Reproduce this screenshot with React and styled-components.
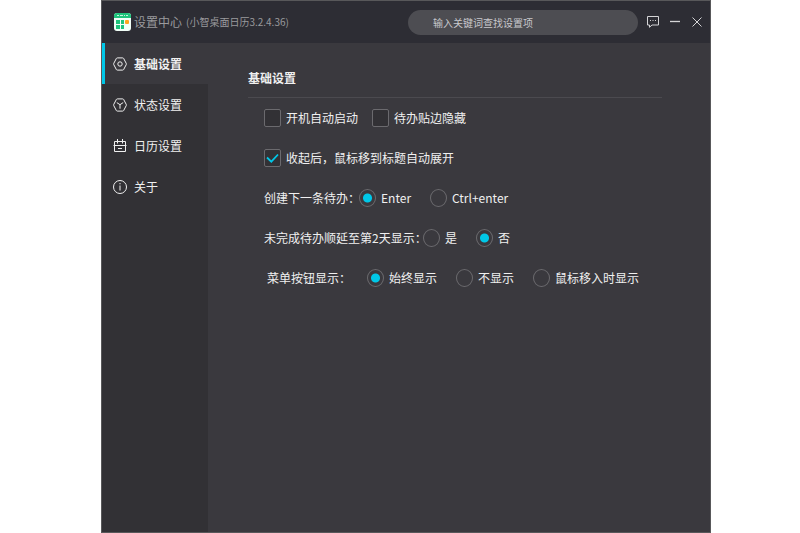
import React, { useState } from 'react';
import styled, { createGlobalStyle } from 'styled-components';

const NAV = [
  { id: 'basic', text: '基础设置', Icon: HexGearIcon },
  { id: 'status', text: '状态设置', Icon: HexStatusIcon },
  { id: 'calendar', text: '日历设置', Icon: CalendarIcon },
  { id: 'about', text: '关于', Icon: InfoIcon },
];

const App = () => {
  const [page, setPage] = useState('basic');

  return (
    <Page>
      <GlobalStyle />
      <Window>
        <Header>
          <LogoIcon />
          <Title>设置中心</Title>
          <Version>(小智桌面日历3.2.4.36)</Version>
          <Search
            type='search'
            placeholder='输入关键词查找设置项'
            aria-label='输入关键词查找设置项'
          />
          <WindowButtons>
            <IconButton type='button' aria-label='反馈'>
              <ChatIcon />
            </IconButton>
            <IconButton type='button' aria-label='最小化'>
              <MinimizeIcon />
            </IconButton>
            <IconButton type='button' aria-label='关闭'>
              <CloseIcon />
            </IconButton>
          </WindowButtons>
        </Header>
        <Body>
          <Sidebar>
            {NAV.map(({ id, text, Icon }) => (
              <NavButton
                key={id}
                type='button'
                $active={page === id}
                onClick={() => setPage(id)}
              >
                <Icon />
                {text}
              </NavButton>
            ))}
          </Sidebar>
          <Content>
            <Heading>基础设置</Heading>
            <Row $gap='14px'>
              <CheckOption>开机自动启动</CheckOption>
              <CheckOption>待办贴边隐藏</CheckOption>
            </Row>
            <Row>
              <CheckOption defaultChecked>
                收起后，鼠标移到标题自动展开
              </CheckOption>
            </Row>
            <RadioRow
              name='next'
              caption='创建下一条待办：'
              width='95px'
              options={['Enter', 'Ctrl+enter']}
              selected='Enter'
            />
            <RadioRow
              name='postpone'
              caption='未完成待办顺延至第2天显示：'
              width='159px'
              options={['是', '否']}
              selected='否'
            />
            <RadioRow
              name='menu'
              caption='菜单按钮显示：'
              width='103px'
              indent='3px'
              options={['始终显示', '不显示', '鼠标移入时显示']}
              selected='始终显示'
            />
          </Content>
        </Body>
      </Window>
    </Page>
  );
};

export default App;

function CheckOption({ children, defaultChecked }) {
  return (
    <Option>
      <CheckWrap>
        <Checkbox type='checkbox' defaultChecked={defaultChecked} />
        <svg width='17' height='18' viewBox='0 0 17 18' aria-hidden='true'>
          <path
            d='M3 8.5 7.3 12.7 14 5.5'
            fill='none'
            stroke='#00c8e8'
            strokeWidth='1.8'
          />
        </svg>
      </CheckWrap>
      {children}
    </Option>
  );
}

function RadioRow({ name, caption, width, indent, options, selected }) {
  return (
    <Row role='radiogroup' aria-label={caption}>
      <Caption $width={width} $indent={indent}>
        {caption}
      </Caption>
      <Options>
        {options.map((text) => (
          <Option key={text}>
            <Radio type='radio' name={name} defaultChecked={text === selected} />
            {text}
          </Option>
        ))}
      </Options>
    </Row>
  );
}

function LogoIcon() {
  return (
    <svg width='17' height='20' viewBox='0 0 17 20' aria-hidden='true'>
      <rect x='0' y='1' width='17' height='18' rx='3' fill='#f2fff8' />
      <path d='M0 6V4a3 3 0 0 1 3-3h11a3 3 0 0 1 3 3v2z' fill='#1fc47c' />
      <path d='M3 3.500h2M6 3.500h3M10 3.500h1M12 3.500h2' stroke='#c8f5de' />
      <path
        d='M2 8h4v4H2zM7 8h3v4H7zM2 13h4v4H2zM7 13h3v4H7z'
        fill='#1fc47c'
      />
      <rect x='11' y='8' width='4' height='4' rx='1' fill='#ffa51e' />
    </svg>
  );
}

function HexGearIcon() {
  return (
    <LineIcon viewBox='0 0 14 14'>
      <path d='M4.300.9h5.400q.6 0 .9.500l2.600 4.900q.4.700 0 1.400l-2.600 4.900q-.3.500-.9.500H4.300q-.6 0-.9-.5L.8 7.700q-.4-.7 0-1.400l2.600-4.900q.3-.5.9-.5z' />
      <circle cx='7' cy='7' r='2.200' />
    </LineIcon>
  );
}

function HexStatusIcon() {
  return (
    <LineIcon viewBox='0 0 14 14'>
      <path d='M4.300.9h5.400q.6 0 .9.500l2.600 4.900q.4.700 0 1.400l-2.600 4.900q-.3.500-.9.500H4.300q-.6 0-.9-.5L.8 7.700q-.4-.7 0-1.400l2.600-4.900q.3-.5.9-.5z' />
      <path d='M3.800 4.600 7 6.700l3.200-2.100M7 6.700v4' />
    </LineIcon>
  );
}

function CalendarIcon() {
  return (
    <LineIcon viewBox='0 0 14 14'>
      <path d='M1.500 2.500h11v10h-11zM.5 6.500h13M4.500 0v4.500M9.500 0v4.500M5 9.500h4' />
    </LineIcon>
  );
}

function InfoIcon() {
  return (
    <LineIcon viewBox='0 0 14 14'>
      <circle cx='7' cy='7' r='6.500' />
      <path d='M7 5.500v5M7 3v1.300' />
    </LineIcon>
  );
}

function ChatIcon() {
  return (
    <LineIcon viewBox='0 0 14 14'>
      <path d='M1.500 1.500h11v8.500H6l-2.500 2.300V10h-2z' />
      <path d='M4 5.500h1M6.500 5.500h1M9 5.500h1' />
    </LineIcon>
  );
}

function MinimizeIcon() {
  return (
    <LineIcon viewBox='0 0 14 14'>
      <path d='M2 6.500h10' strokeWidth='1.3' />
    </LineIcon>
  );
}

function CloseIcon() {
  return (
    <LineIcon viewBox='0 0 14 14'>
      <path d='M2.500 2.500l9 9M11.500 2.500l-9 9' />
    </LineIcon>
  );
}

const GlobalStyle = createGlobalStyle`
  * {
    box-sizing: border-box;
  }

  body {
    margin: 0;
    background: #fff;
  }

  body, button, input {
    font-family: 'Noto Sans CJK SC', 'Noto Sans', sans-serif;
    font-size: 12px;
    line-height: 18px;
  }
`;

const Page = styled.div`
  display: flex;
  min-height: 100vh;
  padding: 0 89px 0 101px;
`;

const Window = styled.div`
  display: flex;
  flex-direction: column;
  flex: 1;
  border: 1px solid #58585a;
  background: #3a393e;
  color: #f0f0f0;
`;

const Header = styled.header`
  display: flex;
  align-items: center;
  height: 42px;
  padding: 0 6px 0 12px;
  background: #2d2d34;
`;

const Title = styled.h1`
  margin: 0 4px 0 3px;
  color: #9a9a9d;
  font-size: 12px;
  font-weight: 400;
`;

const Version = styled.span`
  color: #9a9a9d;
  font-size: 10px;
`;

const Search = styled.input`
  width: 230px;
  height: 25px;
  margin-left: auto;
  padding: 0 25px;
  border: 0;
  border-radius: 13px;
  outline: 0;
  background: #4d4d52;
  color: #fff;
  font-size: 10px;

  &::placeholder {
    color: #c8c8cc;
    opacity: 1;
  }
`;

const WindowButtons = styled.div`
  display: flex;
  gap: 8px;
  margin-left: 8px;
`;

const IconButton = styled.button`
  display: flex;
  padding: 0;
  border: 0;
  background: none;
  color: #d4d4d6;
`;

const LineIcon = styled.svg.attrs({ 'aria-hidden': true })`
  width: 14px;
  height: 14px;
  fill: none;
  stroke: currentColor;
`;

const Body = styled.div`
  display: flex;
  flex: 1;
`;

const Sidebar = styled.nav`
  width: 106px;
  background: #323135;
`;

const NavButton = styled.button`
  display: flex;
  align-items: center;
  gap: 7px;
  width: 100%;
  height: 41px;
  padding: 0 0 0 8px;
  border: 0;
  border-left: 3px solid ${(props) => (props.$active ? '#00c8e8' : 'transparent')};
  background: ${(props) => (props.$active ? '#3a393e' : 'transparent')};
  color: #f0f0f0;
  font-weight: ${(props) => (props.$active ? 700 : 400)};
`;

const Content = styled.main`
  flex: 1;
  padding: 26px 48px 26px 40px;
`;

const Heading = styled.h2`
  margin: 0;
  padding-bottom: 10px;
  border-bottom: 1px solid #4b4a4f;
  font-size: 12px;
  font-weight: 700;
`;

const Row = styled.div`
  display: flex;
  align-items: center;
  gap: ${(props) => props.$gap || 0};
  height: 40px;
  padding-left: 16px;
  white-space: nowrap;
`;

const Caption = styled.span`
  width: ${(props) => props.$width};
  padding-left: ${(props) => props.$indent || 0};
`;

const Options = styled.div`
  display: flex;
  gap: 19px;
`;

const Option = styled.label`
  display: flex;
  align-items: center;
  gap: 5px;
`;

const CheckWrap = styled.span`
  position: relative;
  display: flex;

  svg {
    position: absolute;
    inset: 0;
    visibility: hidden;
    pointer-events: none;
  }

  input:checked + svg {
    visibility: visible;
  }
`;

const Checkbox = styled.input`
  appearance: none;
  width: 17px;
  height: 18px;
  margin: 0;
  border: 1px solid #6b6a6e;
  border-radius: 2px;
  background: #323135;
`;

const Radio = styled.input`
  appearance: none;
  width: 17px;
  height: 18px;
  margin: 0;
  border: 1px solid #6b6a6e;
  border-radius: 50%;

  &:checked {
    background: radial-gradient(circle, #00c8e8 4px, transparent 5px);
  }
`;
